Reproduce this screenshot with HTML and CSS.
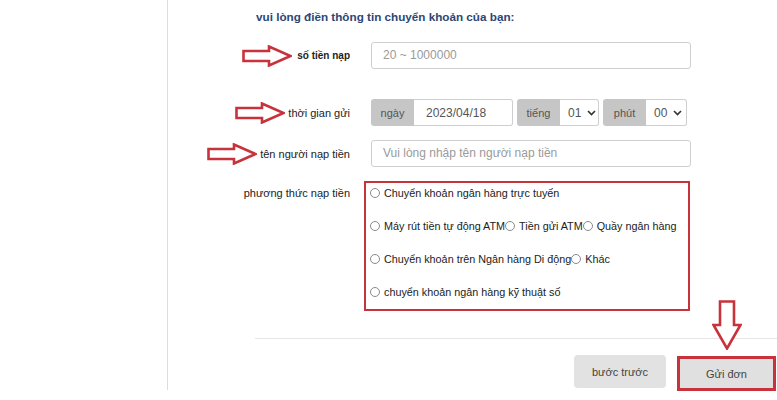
FILE: index.html
```html
<!DOCTYPE html>
<html lang="vi">
<head>
<meta charset="utf-8">
<link rel="stylesheet" href="styles.css">
</head>
<body>
<div class="panel">
  <h2 class="title">vui lòng điền thông tin chuyển khoản của bạn:</h2>
  <div class="form">
    <div class="label row1">
      <svg class="arrow" width="50" height="22" viewBox="0 0 50 22"><path d="M1.5 6 H27 V1.5 L48.5 11 L27 20.5 V16 H1.5 Z" fill="#fff" stroke="#c8323a" stroke-width="2.6"/></svg>
      <span>số tiền nạp</span>
    </div>
    <div class="field row1"><div class="input placeholder">20 ~ 1000000</div></div>

    <div class="label row2">
      <svg class="arrow" width="50" height="22" viewBox="0 0 50 22"><path d="M1.5 6 H27 V1.5 L48.5 11 L27 20.5 V16 H1.5 Z" fill="#fff" stroke="#c8323a" stroke-width="2.6"/></svg>
      <span>thời gian gửi</span>
    </div>
    <div class="field row2">
      <div class="group">
        <span class="addon">ngày</span><span class="gbox date">2023/04/18</span>
      </div>
      <div class="group">
        <span class="addon">tiếng</span><span class="gbox sel">01<svg class="chev" width="9" height="6" viewBox="0 0 9 6"><path d="M1 1 L4.5 4.5 L8 1" fill="none" stroke="#333" stroke-width="1.6"/></svg></span>
      </div>
      <div class="group">
        <span class="addon">phút</span><span class="gbox sel sel2">00<svg class="chev" width="9" height="6" viewBox="0 0 9 6"><path d="M1 1 L4.5 4.5 L8 1" fill="none" stroke="#333" stroke-width="1.6"/></svg></span>
      </div>
    </div>

    <div class="label row3">
      <svg class="arrow" width="50" height="22" viewBox="0 0 50 22"><path d="M1.5 6 H27 V1.5 L48.5 11 L27 20.5 V16 H1.5 Z" fill="#fff" stroke="#c8323a" stroke-width="2.6"/></svg>
      <span>tên người nạp tiền</span>
    </div>
    <div class="field row3"><div class="input placeholder">Vui lòng nhập tên người nạp tiền</div></div>

    <div class="label row4"><span>phương thức nạp tiền</span></div>
    <div class="field row4">
      <div class="options">
        <div class="opt"><i class="radio"></i>Chuyển khoản ngân hàng trực tuyến</div>
        <div class="opt"><i class="radio"></i>Máy rút tiền tự động ATM<i class="radio"></i>Tiền gửi ATM<i class="radio"></i>Quầy ngân hàng</div>
        <div class="opt"><i class="radio"></i>Chuyển khoản trên Ngân hàng Di động<i class="radio"></i>Khác</div>
        <div class="opt"><i class="radio"></i>chuyển khoản ngân hàng kỹ thuật số</div>
      </div>
    </div>
  </div>
  <div class="footer">
    <div class="buttons">
      <button class="btn">bước trước</button>
      <div class="submit-wrap">
        <svg class="down" width="30" height="50" viewBox="0 0 30 50"><path d="M8 1.5 H22 V25 H28.5 L15 48.5 L1.5 25 H8 Z" fill="#fff" stroke="#c8323a" stroke-width="2.6"/></svg>
        <button class="btn submit">Gửi đơn</button>
      </div>
    </div>
  </div>
</div>
</body>
</html>
```

FILE: styles.css
```css
* { box-sizing: border-box; }
html, body { margin: 0; padding: 0; background: #fff; }
body {
  font-family: "Liberation Sans", Arial, sans-serif;
  color: #222;
  width: 777px;
  height: 400px;
  overflow: hidden;
}
.panel {
  margin-left: 167px;
  border-left: 1px solid #dcdcdc;
  height: 390px;
  padding-top: 9px;
}
.title {
  margin: 0 0 17px 88px;
  font-size: 11.7px;
  line-height: 16px;
  font-weight: bold;
  color: #2d4675;
}
.form {
  display: grid;
  grid-template-columns: 182px 320px;
  column-gap: 21px;
}
.label {
  display: flex;
  justify-content: flex-end;
  align-items: center;
  gap: 3px;
  font-size: 11px;
  color: #222;
  height: 27px;
}
.label.row1 { gap: 5px; }
.label.row1 span { font-weight: bold; font-size: 10px; }
.row2 { margin-top: 30px; }
.row3 { margin-top: 14px; }
.label.row4 { align-items: flex-start; padding-top: 6px; height: auto; margin-top: 14px; }
.arrow { display: block; flex: none; }
.input {
  height: 27px;
  border: 1px solid #cfcfcf;
  border-radius: 3px;
  padding-left: 11px;
  font-size: 12px;
  line-height: 25px;
}
.placeholder { color: #9a9a9a; }
.field.row2 { display: flex; gap: 4px; }
.group { display: flex; height: 27px; }
.addon {
  width: 43px;
  background: #c6c6c6;
  border-radius: 3px 0 0 3px;
  font-size: 11px;
  color: #555;
  display: flex;
  align-items: center;
  justify-content: center;
}
.gbox {
  border: 1px solid #cfcfcf;
  border-left: none;
  border-radius: 0 3px 3px 0;
  font-size: 12px;
  color: #555;
  display: flex;
  align-items: center;
}
.date { width: 99px; padding-left: 12px; }
.sel { width: 39px; padding-left: 8px; gap: 6px; }
.sel2 { width: 41px; }
.chev { display: block; }
.field.row4 { margin-top: 14px; }
.options {
  border: 2px solid #c8323a;
  height: 130px;
  margin-left: -7px;
  width: 326px;
  padding: 3px 4px 0 4px;
  display: flex;
  flex-direction: column;
  gap: 19px;
}
.opt {
  font-size: 10.8px;
  line-height: 14px;
  color: #222;
  display: flex;
  align-items: center;
  white-space: nowrap;
}
.radio {
  display: inline-block;
  width: 10px;
  height: 10px;
  border: 1px solid #8a8a8a;
  border-radius: 50%;
  margin-right: 4px;
  flex: none;
}
.footer {
  margin-top: 27px;
  margin-left: 87px;
  border-top: 1px solid #e6e6e6;
  padding-top: 16px;
}
.buttons {
  display: flex;
  justify-content: flex-end;
  align-items: flex-start;
  gap: 11px;
  padding-right: 1px;
}
.btn {
  font-family: "Liberation Sans", Arial, sans-serif;
  font-size: 11px;
  color: #444;
  background: #e2e2e2;
  border: none;
  border-radius: 4px;
  width: 92px;
  height: 33px;
  padding: 0;
}
.submit-wrap { position: relative; margin-top: 1px; }
.submit {
  width: 99px;
  height: 35px;
  border: 3px solid #c8323a;
  border-radius: 0;
  background: #e0e0e0;
}
.down {
  position: absolute;
  left: 35px;
  top: -56px;
  display: block;
}
```
